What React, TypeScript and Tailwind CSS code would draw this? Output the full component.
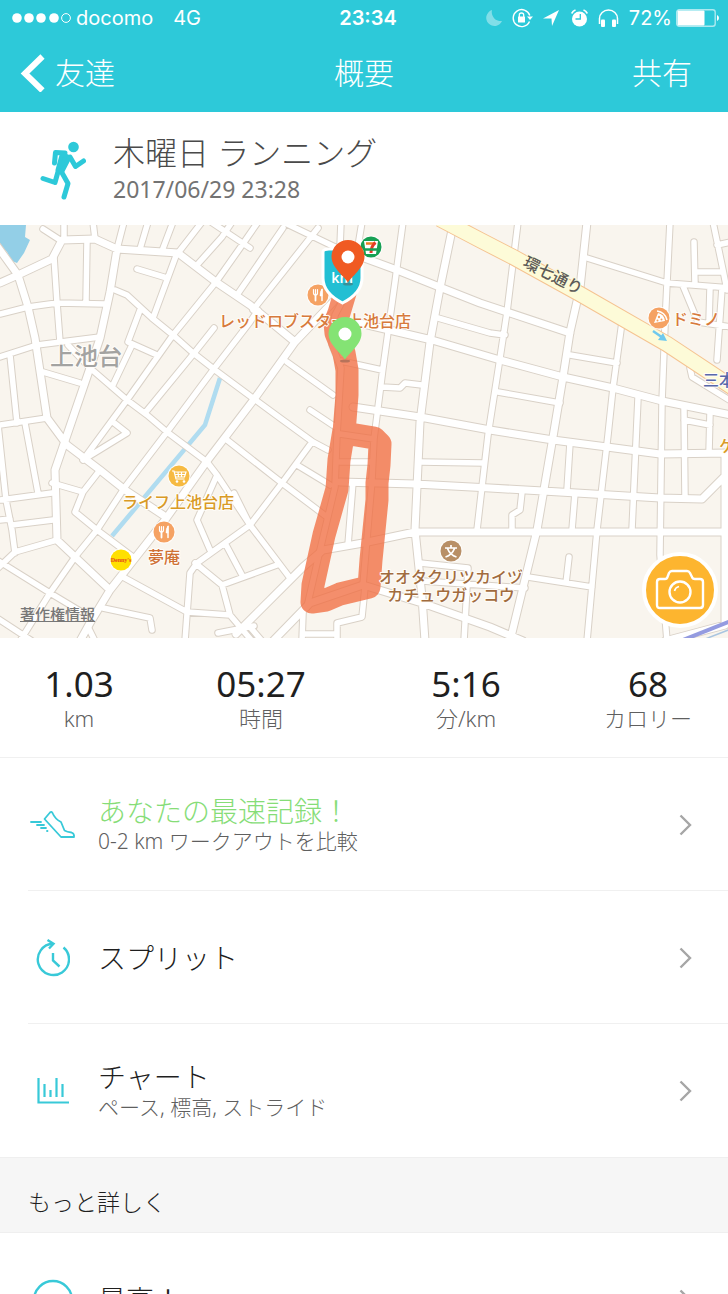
import type { ReactNode } from "react";

const TEXT_FONT = "font-['Noto_Sans','Noto_Sans_CJK_JP',sans-serif]";

const STATS = [
  { value: "1.03", label: "km" },
  { value: "05:27", label: "時間" },
  { value: "5:16", label: "分/km" },
  { value: "68", label: "カロリー" },
];

// Streets in map units, grouped by width
const MAIN_STREETS = [
  "M0 58L18 50L52 34L62 15L95 14L117 24L178 28L216 57L250 80L295 117",
  "M-3 21L18 50L28 82L35 113L47 193L67 220L100 245L125 265L163 290",
  "M117 24L110 67L100 113L90 143L67 210L55 245L57 315L110 365",
  "M333 77L295 117L255 173L207 236L165 295L110 365L90 398L80 416",
  "M337 23L397 45L442 63L480 78L570 108",
  "M355 97L385 104L432 115L500 135L563 152L613 163L662 176L731 190",
  "M353 182L420 192L490 205L553 215L607 222L660 229L731 228",
  "M452 5L440 63L430 117L420 197L415 305L422 372L425 416",
  "M236 409L303 342L323 325L363 318L415 307L731 307",
  "M340 257L415 259L490 263L543 266L660 273L702 274L728 248",
  "M725 230L725 400L665 416",
  "M587 -3L580 63L570 107L563 152L553 212L537 305L510 416",
  "M273 416L310 378L363 360L425 379L490 402L523 416",
];

const SIDE_STREETS = [
  "M0 89L28 82L57 78L105 79",
  "M0 132L37 120L100 112",
  "M54 32L57 78L60 117",
  "M87 15L86 77",
  "M64 14L64 -3M95 14L93 -3M117 24L124 -3M140 24L148 -3M162 26L173 -3",
  "M43 4L60 15",
  "M178 28L202 -3M197 40L222 12L232 -3M211 -3L250 23",
  "M216 57L240 23L258 -3M237 70L283 3",
  "M253 85L318 3M283 -3L337 23M341 -3L340 22",
  "M115 65L127 70L152 93L173 110L192 127L215 145L250 171L280 193L313 217L328 225",
  "M137 44L167 53M177 28L153 93",
  "M140 85L128 117L157 130M132 120L112 162",
  "M216 57L173 110L127 175L83 235",
  "M214 103L195 127L145 188",
  "M258 85L250 97L213 145L167 207L125 262L97 305L75 332L50 368L20 416",
  "M68 120L90 143L127 175L147 190L167 207L207 237L217 250",
  "M43 147L80 158M10 130L17 198M0 200L47 193M25 198L38 268",
  "M113 197L127 208L83 235",
  "M-2 200L6 275L12 305L15 328",
  "M0 275L52 268M0 295L10 294M12 300L53 295M-3 344L15 327L57 315",
  "M52 258L83 267M100 245L83 267L75 287L97 305L133 332",
  "M-3 335L50 368L80 386M-3 393L32 416M88 402L95 416",
  "M123 352L187 387L230 390L252 416M103 383L150 393L152 405",
  "M217 250L197 295L210 325M217 250L250 300",
  "M312 217L282 258L250 300L197 338L190 348L185 416",
  "M195 338L222 360L230 390M222 360L277 340M225 318L242 350M218 408L254 401",
  "M227 215L250 233L282 258L327 292M234 268L250 300L290 353",
  "M297 240L330 260M287 137L333 170M310 185L337 203",
  "M303 388L302 416M365 362L362 392L337 398L337 416M303 409L337 409M250 402L262 416",
  "M353 257L348 320M340 237L372 237M420 237L483 238",
  "M362 -3L352 58L335 90L332 120L341 143L337 210L335 262L320 325L307 382",
  "M340 209L374 214L372 255L363 360",
  "M403 -3L395 57L383 143L374 214",
  "M438 93L490 108L505 110M341 136L382 145",
  "M382 162L400 163L405 158L422 160",
  "M518 -3L507 87L500 133L488 210L477 305",
  "M622 97L613 163L608 210L597 305L587 416",
  "M670 -3L667 58L665 100L662 177L660 330L667 416",
  "M587 33L667 58L731 63",
  "M713 -3L723 45L727 65M694 17L695 60M695 47L723 47M731 17L717 20",
  "M683 61L698 97L731 102M710 63L709 97M722 63L717 135",
  "M690 143L692 152L731 176",
  "M570 130L617 138M498 167L560 178",
  "M638 173L632 305M684 183L685 272M710 188L709 228M684 195L710 200",
  "M570 218L567 265M522 267L520 285L512 290L512 305M575 268L572 305",
  "M569 332L566 358M528 352L592 362M420 338L468 343L464 416M422 356L525 363",
];

function Streets() {
  return (
    <g fill="none" strokeLinecap="round" strokeLinejoin="round">
      <path d={SIDE_STREETS.join("")} stroke="#d9d1c7" strokeWidth="7.5" />
      <path d={MAIN_STREETS.join("")} stroke="#d9d1c7" strokeWidth="9" />
      <path d={SIDE_STREETS.join("")} stroke="#fff" strokeWidth="5.5" />
      <path d={MAIN_STREETS.join("")} stroke="#fff" strokeWidth="7" />
    </g>
  );
}

function Poi({ x, y, color, children }: { x: number; y: number; color: string; children: ReactNode }) {
  return (
    <g transform={`translate(${x} ${y})`}>
      <circle r="11.5" fill="#fff" opacity="0.8" />
      <circle r="10.5" fill={color} />
      {children}
    </g>
  );
}

function Fork() {
  return (
    <g stroke="#fff" fill="none" strokeLinecap="round">
      <path d="M-4.5 -5.5V-2Q-4.5 0 -2.5 0Q-0.5 0 -0.5 -2V-5.5M-2.5 -5.5V-1" strokeWidth="1.2" />
      <path d="M-2.5 0V5.5" strokeWidth="1.8" />
      <path d="M4 -5.5V5.5" strokeWidth="1.5" />
      <path d="M4 -6Q1.8 -4 2 1H4Z" fill="#fff" strokeWidth="0.5" />
    </g>
  );
}

function Pin({ x, y, color }: { x: number; y: number; color: string }) {
  return (
    <g transform={`translate(${x} ${y})`}>
      <ellipse cy="27" rx="5" ry="1.5" fill="#5c4a42" opacity="0.4" />
      <path
        d="M0 25.5C-3 20 -16.5 11 -16.5 -0.5A16.5 16.5 0 0 1 16.5 -0.5C16.5 11 3 20 0 25.5Z"
        fill={color}
      />
      <circle r="6.5" fill="#fff" />
    </g>
  );
}

function RouteMap() {
  return (
    <svg viewBox="0 0 728 413" className="block w-full" role="img" aria-label="ルート">
      <rect width="728" height="413" fill="#f9f5ee" />
      <path d="M0 0H26L25 12L30 15L24 28L17 38L12 36L7 27L0 20Z" fill="#93cfe7" />
      <path d="M220 153L205 200L112 311" fill="none" stroke="#b0dcf0" strokeWidth="4.5" />
      <Streets />

      <g fill="none">
        <path d="M440 -6L480 15L513 32L580 69L667 119L735 164" stroke="#f5c391" strokeWidth="16.5" />
        <path d="M440 -6L480 15L513 32L580 69L667 119L735 164" stroke="#fdfbd8" strokeWidth="14.5" />
        <path d="M683 415L731 396" stroke="#949be0" strokeWidth="4" />
        <path d="M700 416L731 404" stroke="#a9c5e0" strokeWidth="1.5" />
        <path d="M653 106L663 113" stroke="#6fc9ee" strokeWidth="2.5" />
        <path d="M663 108L667 116L658 115Z" fill="#6fc9ee" />
      </g>

      <path
        d="M345 68L339 88L335 98L336 108L344 128L347 145L347 170L344 208L374 213L380 219L379 240L377 258L377 275L374 305L371 335L369 362L340 369L326 375L312 377L313 360L324 310L337 264L339 235L344 205"
        fill="none"
        stroke="#f16e43"
        strokeWidth="23"
        strokeLinecap="round"
        strokeLinejoin="round"
        opacity="0.78"
      />

      <Poi x={318} y={70} color="#f5a263">
        <Fork />
      </Poi>
      <Poi x={164} y={307} color="#f5a263">
        <Fork />
      </Poi>
      <Poi x={659} y={93} color="#f5a263">
        <path d="M-5 5L-1 -5Q5 -4 6 3Z" fill="#fff" />
        <path d="M-2 -7Q6 -6 8 2" fill="none" stroke="#fff" strokeWidth="1.5" />
        <circle cx="0" cy="-1" r="1.2" fill="#f5a263" />
        <circle cx="-1.5" cy="2.5" r="1" fill="#f5a263" />
        <circle cx="2.5" cy="1.5" r="1" fill="#f5a263" />
      </Poi>
      <Poi x={179} y={251} color="#f6ba42">
        <path d="M-7 -5H-5L-3 3H5.5M-4.5 -4H7L5.5 1H-3.500M-4 -1.5H6M-1 -4L-0.5 1M2.500 -4V1" fill="none" stroke="#fff" strokeWidth="1.2" />
        <circle cx="-2" cy="5.5" r="1.3" fill="#fff" />
        <circle cx="5" cy="5.5" r="1.3" fill="#fff" />
      </Poi>
      <Poi x={451} y={326} color="#b88f66">
        <path d="M0 -6V-3M-6 -3H6M-3.5 -2.5Q-1 4 5.5 6M3.5 -2.5Q1 4 -5.5 6" fill="none" stroke="#fff" strokeWidth="1.7" />
      </Poi>
      <Poi x={121} y={335} color="#ffe000">
        <text y="2" textAnchor="middle" fontSize="6" fill="#e6451c" className="font-['Liberation_Serif',serif] font-bold">
          Denny's
        </text>
      </Poi>
      <Poi x={371} y={22} color="#17a053">
        <path d="M-7 -6H7L5 7H-5Z" fill="#fff" />
        <path d="M-5 -3.5H4" stroke="#ef7d22" strokeWidth="2.5" />
        <path d="M4.5 -4.5Q0 -1 0 6" fill="none" stroke="#e23c26" strokeWidth="3" />
        <path d="M-7 2.5H7" stroke="#17a053" strokeWidth="2.5" />
      </Poi>

      <g
        className="font-['Noto_Sans_CJK_JP',sans-serif] font-medium"
        fontSize="16"
        stroke="#fffdf9"
        strokeWidth="2"
        strokeLinejoin="round"
        paintOrder="stroke"
      >
        <text x="50" y="140" fontSize="24" fill="#a3a3a1">上池台</text>
        <text x="219" y="102" fill="#d77a3c">レッドロブスター上池台店</text>
        <text x="672" y="100" fill="#d77a3c">ドミノ</text>
        <text x="122" y="283" fill="#d99a26">ライフ上池台店</text>
        <text x="148" y="338" fill="#cf7136">夢庵</text>
        <text x="703" y="161" fill="#5868ab">三本</text>
        <text x="719" y="227" fill="#d99a26">ケ</text>
        <text x="451" y="358" textAnchor="middle" fill="#a16b3e">オオタクリツカイヅ</text>
        <text x="451" y="376" textAnchor="middle" fill="#a16b3e">カチュウガッコウ</text>
        <text transform="translate(522 41) rotate(27)" fill="#5c5a57" stroke="#fdfbd8">環七通り</text>
      </g>

      <path
        d="M329 24H359Q362 24 362 27V53Q362 68 342.5 78Q323 68 323 53V27Q323 24 329 24Z"
        fill="#22bfd3"
        stroke="#fff"
        strokeWidth="3"
      />
      <text x="342" y="58" textAnchor="middle" fontSize="14" fill="#fff" className="font-['Noto_Sans',sans-serif] font-semibold">
        km
      </text>
      <Pin x={348} y={32} color="#f05a22" />
      <Pin x={345} y={109} color="#84e374" />
    </svg>
  );
}

function StatusBar() {
  return (
    <div className="grid h-9 grid-cols-[1fr_auto_1fr] items-center pr-2 pl-3 font-['Inter',sans-serif] text-[20px] leading-6">
      <div className="flex items-center">
        <svg width="60" height="12" viewBox="0 0 60 12" className="mr-1" aria-hidden="true">
          {[5, 17, 29, 42].map((cx) => (
            <circle key={cx} cx={cx} cy="6" r="4.8" fill="#fff" />
          ))}
          <circle cx="54" cy="6" r="4.4" fill="none" stroke="#fff" />
        </svg>
        <span>docomo</span>
        <span className="ml-5">4G</span>
      </div>
      <span className="pl-1 font-semibold">23:34</span>
      <div className="flex items-center justify-end">
        <svg width="16" height="18" viewBox="0 0 16 18" className="mr-2.5 opacity-40" aria-hidden="true">
          <path d="M6 1A8.2 8.2 0 1 0 16 12A9 9 0 0 1 6 1Z" fill="#fff" />
        </svg>
        <svg width="21" height="20" viewBox="0 0 21 20" className="mr-2.5" aria-hidden="true">
          <path d="M17.5 13.5A8.5 8.5 0 1 1 17.8 7.5" fill="none" stroke="#fff" strokeWidth="1.4" />
          <path d="M15 8.5H21L18 12Z" fill="#fff" />
          <rect x="6" y="8.5" width="7" height="6" rx="0.5" fill="#fff" />
          <path d="M7.3 9V7Q7.3 5 9.5 5Q11.7 5 11.7 7V9" fill="none" stroke="#fff" strokeWidth="1.3" />
        </svg>
        <svg width="16" height="16" viewBox="0 0 16 16" className="mr-3" aria-hidden="true">
          <path d="M0 8.5L16 0L9 16L8.5 8.5Z" fill="#fff" />
        </svg>
        <svg width="17" height="18" viewBox="0 0 17 18" className="mr-2.5" aria-hidden="true">
          <circle cx="8.5" cy="10" r="7.5" fill="#fff" />
          <path d="M0.8 4.5A6 6 0 0 1 4.5 1M16.2 4.5A6 6 0 0 0 12.5 1" fill="none" stroke="#fff" strokeWidth="1.8" />
          <path d="M9.3 5V10H4.5" fill="none" stroke="#2dc9d9" strokeWidth="1.3" />
        </svg>
        <svg width="21" height="18" viewBox="0 0 21 18" className="mr-2.5" aria-hidden="true">
          <path d="M1.5 15V9.5A9 8.500 0 0 1 19.500 9.500V15" fill="none" stroke="#fff" strokeWidth="1.5" />
          <rect x="3" y="10.5" width="4" height="7.5" rx="1" fill="#fff" />
          <rect x="14" y="10.5" width="4" height="7.5" rx="1" fill="#fff" />
        </svg>
        <span className="mr-1">72%</span>
        <svg width="44" height="18" viewBox="0 0 44 18" aria-hidden="true">
          <rect x="0.7" y="0.7" width="38.5" height="16.6" rx="2.5" fill="none" stroke="#fff" strokeOpacity="0.6" strokeWidth="1.4" />
          <rect x="1.5" y="1.5" width="27" height="15" rx="1" fill="#fff" />
          <path d="M41 6Q43 7 43 9Q43 11 41 12Z" fill="#fff" />
        </svg>
      </div>
    </div>
  );
}

function NavBar() {
  return (
    <nav className="grid h-[76px] grid-cols-[1fr_auto_1fr] items-center pr-9 pb-0.5 pl-5 text-[30px] leading-9 font-light">
      <button type="button" className="flex items-center gap-2.5 justify-self-start">
        <svg width="25" height="38" viewBox="0 0 25 38" aria-hidden="true">
          <path d="M22.5 2.5L5 19.500L22.500 36.500" fill="none" stroke="#fff" strokeWidth="6" />
        </svg>
        友達
      </button>
      <h1 className="pl-4">概要</h1>
      <button type="button" className="justify-self-end">
        共有
      </button>
    </nav>
  );
}

function RunnerIcon() {
  return (
    <svg width="46" height="64" viewBox="0 -5 46 64" className="shrink-0" aria-hidden="true">
      <g fill="none" stroke="#2dc9d9" strokeLinecap="round" strokeLinejoin="round" strokeWidth="5">
        <circle cx="33.5" cy="5" r="5.3" fill="#2dc9d9" stroke="none" />
        <path d="M14.5 21L15.500 10.500L25 11" />
        <path d="M30 15L35.500 24.500L43.500 19" />
        <path d="M22 11.500L29.500 15.500L22.500 29L17.500 28Z" fill="#2dc9d9" strokeWidth="4" />
        <path d="M18.500 28L15 40.500L3 36.500" />
        <path d="M21 29L28 41.500L24 55" />
      </g>
    </svg>
  );
}

function ShoeIcon() {
  return (
    <svg width="46" height="30" viewBox="0 0 46 30" aria-hidden="true">
      <g fill="none" stroke="#38c9d8" strokeWidth="1.8" strokeLinejoin="round" strokeLinecap="round">
        <path d="M14.5 9L20 2.500Q21.500 1 22.500 3Q25 9 31 12L34.500 20.500Q37 22 41.500 22.500Q44.500 23.500 44 27H31Z" />
        <path d="M1 12H11M7 15H14M11 18H16M17 21H17.500" />
      </g>
    </svg>
  );
}

function SplitIcon() {
  return (
    <svg width="34" height="38" viewBox="0 0 34 38" aria-hidden="true">
      <g fill="none" stroke="#38c9d8" strokeWidth="2.4">
        <path d="M17 4.800A15.600 15.600 0 1 0 27.500 8.500" />
        <path d="M11.500 1L17.500 4.800L13 9.500M17 14V21.500L23.500 27.500" />
      </g>
    </svg>
  );
}

function ChartIcon() {
  return (
    <svg width="32" height="28" viewBox="0 0 32 28" aria-hidden="true">
      <g fill="none" stroke="#38c9d8" strokeWidth="2.2">
        <path d="M1.500 1V25.500H32" />
        <path d="M7.500 7V20M13.500 13V20M19.500 1V20M25.500 7V20" />
      </g>
    </svg>
  );
}

function SmileIcon() {
  return (
    <svg width="42" height="42" viewBox="0 0 42 42" aria-hidden="true">
      <circle cx="21" cy="21" r="19" fill="none" stroke="#38c9d8" strokeWidth="2.4" />
      <circle cx="13.5" cy="17.500" r="2.5" fill="#38c9d8" />
      <circle cx="27.5" cy="17.500" r="2.5" fill="#38c9d8" />
      <path d="M11 26Q21 36 31 26" fill="none" stroke="#38c9d8" strokeWidth="2.4" />
    </svg>
  );
}

interface RowProps {
  icon: ReactNode;
  title: string;
  titleClass?: string;
  subtitle?: string;
}

function Row({ icon, title, titleClass = "text-[#1f1f1f]", subtitle }: RowProps) {
  return (
    <button type="button" className="flex h-[133px] w-full items-center pr-9 text-left">
      <span className="flex w-[98px] shrink-0 justify-center pl-2">{icon}</span>
      <span className="flex flex-1 flex-col">
        <span className={`text-[28px] leading-8 font-light ${titleClass}`}>{title}</span>
        {subtitle && <span className="text-[21px] leading-7 font-light text-[#5f5f5f]">{subtitle}</span>}
      </span>
      <svg width="13" height="22" viewBox="0 0 13 22" aria-hidden="true">
        <path d="M1.500 1.500L11 11L1.500 20.500" fill="none" stroke="#a6a6a6" strokeWidth="2.4" />
      </svg>
    </button>
  );
}

export default function App() {
  return (
    <div className={`flex h-screen flex-col bg-white ${TEXT_FONT}`} lang="ja">
      <header className="shrink-0 bg-[#2dc9d9] text-white">
        <StatusBar />
        <NavBar />
      </header>

      <main className="min-h-0 flex-1 overflow-y-auto [scrollbar-width:none]">
        {/* Workout title */}
        <section className="flex h-[113px] items-center gap-[27px] pl-10">
          <RunnerIcon />
          <div>
            <h2 className="text-[32px] leading-10 font-light text-[#4a4a4a]">木曜日 ランニング</h2>
            <p className="text-[23px] leading-8 text-[#737373]">2017/06/29 23:28</p>
          </div>
        </section>

        {/* Route */}
        <section className="relative">
          <RouteMap />
          <a
            href="#legal"
            className="absolute bottom-3 left-5 font-['Noto_Sans_CJK_JP',sans-serif] text-[15px] leading-6 font-medium text-[#777] underline"
          >
            著作権情報
          </a>
          <button
            type="button"
            aria-label="写真を追加"
            className="absolute right-2.5 bottom-2.5 flex size-[76px] items-center justify-center rounded-full border-4 border-white bg-[#fdb52f]"
          >
            <svg width="50" height="42" viewBox="0 0 50 42" fill="none" stroke="#fff" strokeWidth="2.4" strokeLinejoin="round" aria-hidden="true">
              <path d="M2 13Q2 10 5 10H10Q12 10 12.500 8L14 4Q15 2 17 2H32Q34 2 35 4L37 8Q37.500 10 40 10H45Q48 10 48 13V36Q48 39 45 39H5Q2 39 2 36Z" />
              <circle cx="25" cy="23" r="10.5" />
              <path d="M19.500 22A6 6 0 0 1 24 17.500" strokeWidth="1.6" />
            </svg>
          </button>
        </section>

        <dl className="grid h-[120px] grid-cols-[158fr_206fr_204fr_160fr] items-center border-b border-[#f0f0f0] text-center">
          {STATS.map((stat) => (
            <div key={stat.label} className="flex flex-col-reverse">
              <dt className="text-[22px] leading-7 font-light text-[#5f5f5f]">{stat.label}</dt>
              <dd className="text-[35px] leading-10 text-[#1f1f1f]">{stat.value}</dd>
            </div>
          ))}
        </dl>

        <Row
          icon={<ShoeIcon />}
          title="あなたの最速記録！"
          titleClass="text-[#86dd77]"
          subtitle="0-2 km ワークアウトを比較"
        />
        <hr className="-mt-px ml-7 border-[#f0f0f0]" />
        <Row icon={<SplitIcon />} title="スプリット" />
        <hr className="-mt-px ml-7 border-[#f0f0f0]" />
        <Row icon={<ChartIcon />} title="チャート" subtitle="ペース, 標高, ストライド" />

        <h3 className="border-y border-[#efefef] bg-[#f6f6f6] px-7 pt-7 pb-3.5 text-[23px] leading-8 font-light text-[#1f1f1f]">
          もっと詳しく
        </h3>
        <Row icon={<SmileIcon />} title="最高！" />
      </main>
    </div>
  );
}
